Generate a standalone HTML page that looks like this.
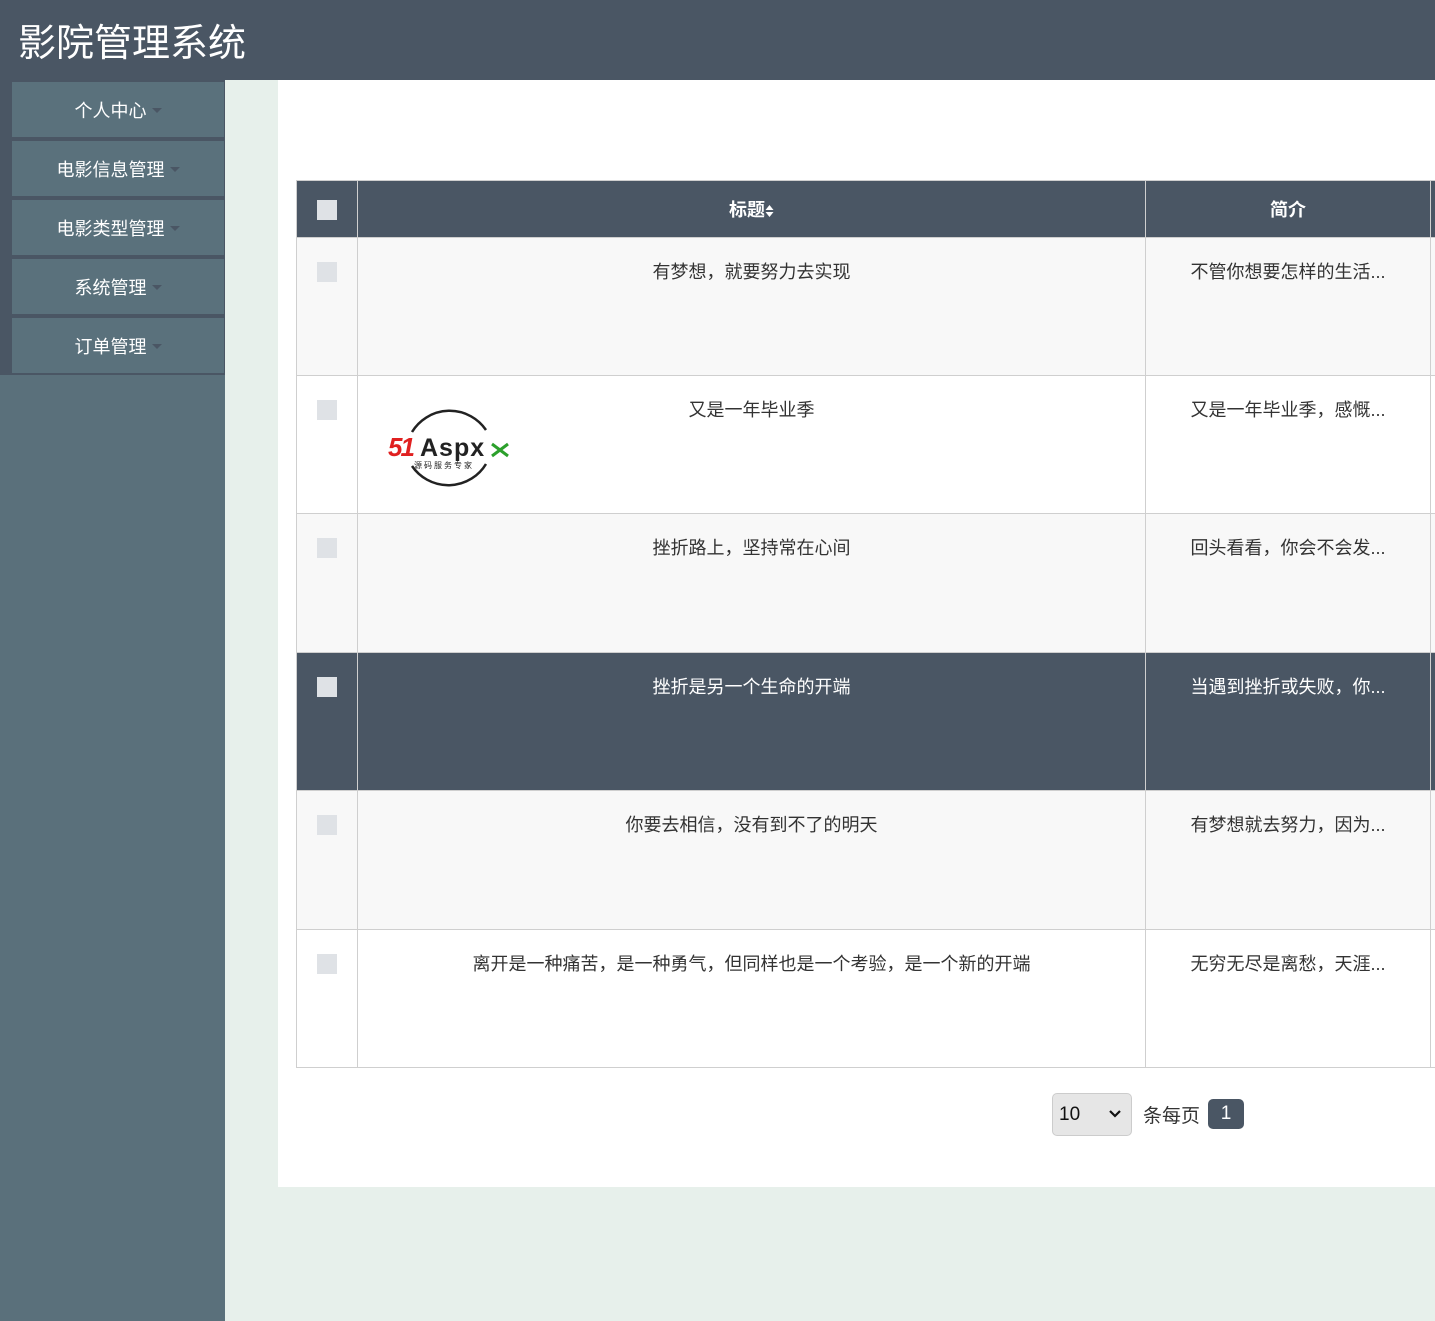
<!DOCTYPE html>
<html><head><meta charset="utf-8"><style>
*{margin:0;padding:0;box-sizing:border-box}
body{width:1435px;height:1321px;overflow:hidden;position:relative;background:#e7f0eb;font-family:"Liberation Sans","Noto Sans CJK SC",sans-serif;}
.hdr{position:absolute;left:0;top:0;width:1435px;height:80px;background:#4a5664;}
.hdr h1{position:absolute;left:18px;top:20px;font-size:38px;font-weight:normal;color:#fff;line-height:48px;}
.side{position:absolute;left:0;top:80px;width:225px;height:1241px;background:#5a707b;}
.menu{position:absolute;left:0;top:0;width:225px;height:295px;background:#4a5664;}
.mi{position:absolute;left:12px;width:212px;height:55px;background:#5a717c;color:#fff;font-size:18px;text-align:center;line-height:58px;}
.mi i{display:inline-block;width:0;height:0;border-left:5px solid transparent;border-right:5px solid transparent;border-top:5px solid #4a5664;vertical-align:middle;margin-left:5px;margin-top:-4px}
.panel{position:absolute;left:278px;top:80px;width:1157px;height:1107px;background:#fff;}
table{position:absolute;left:296px;top:180px;border-collapse:collapse;table-layout:fixed;width:1150px;font-size:18px;color:#333;}
td,th{border:1px solid #cfcfcf;text-align:center;vertical-align:top;}
th{background:#4a5664;color:#fff;height:57px;vertical-align:middle;font-size:18px;}
td{height:138px;padding-top:20px;}
tr.t td{height:139px}
tr.o td{background:#f8f8f8}
tr.w td{background:#fff}
tr.h td{background:#4a5664;color:#fff}
.cb{display:inline-block;width:20px;height:20px;background:#dfe2e6;margin-top:4px}
th .cb{margin-top:0;vertical-align:middle}
.sel{position:absolute;left:1052px;top:1093px;width:80px;height:43px;border:1px solid #ccc;border-radius:5px;background:#e6e6e6;font-size:19px;line-height:41px;padding-left:6px;color:#111}
.sel svg{position:absolute;right:10px;top:16px}
.per{position:absolute;left:1143px;top:1101px;font-size:19px;color:#333}
.pg{position:absolute;left:1208px;top:1099px;width:36px;height:30px;border-radius:5px;background:#4a5664;color:#fff;font-size:19px;text-align:center;line-height:30px}
</style></head><body>
<div class="hdr"><h1>影院管理系统</h1></div>
<div class="side"><div class="menu">
<div class="mi" style="top:2px">个人中心<i></i></div>
<div class="mi" style="top:61px">电影信息管理<i></i></div>
<div class="mi" style="top:120px">电影类型管理<i></i></div>
<div class="mi" style="top:179px">系统管理<i></i></div>
<div class="mi" style="top:238px">订单管理<i></i></div>
</div></div>
<div class="panel"></div>
<table>
<colgroup><col style="width:61px"><col style="width:788px"><col style="width:285px"><col style="width:16px"></colgroup>
<tr><th><span class="cb"></span></th><th>标题<svg width="9" height="14" viewBox="0 0 9 14" style="vertical-align:middle"><path d="M0.5 6 L4.5 1 L8.5 6Z M0.5 8 L4.5 13 L8.5 8Z" fill="#fff"/></svg></th><th>简介</th><th></th></tr>
<tr class="o"><td><span class="cb"></span></td><td>有梦想，就要努力去实现</td><td>不管你想要怎样的生活...</td><td></td></tr>
<tr class="w"><td><span class="cb"></span></td><td style="position:relative">又是一年毕业季
<svg style="position:absolute;left:28px;top:26px" width="126" height="92" viewBox="0 0 126 92"><path d="M26 30 A44 44 0 0 1 100 28" fill="none" stroke="#222" stroke-width="2.5"/><path d="M100 62 A44 44 0 0 1 26 64" fill="none" stroke="#222" stroke-width="2.5"/><text x="2" y="54" font-size="26" font-weight="bold" font-style="italic" fill="#e02020" font-family="Liberation Sans" letter-spacing="-2">51</text><text x="34" y="54" font-size="25" font-weight="bold" fill="#222" font-family="Liberation Sans" letter-spacing="1">Aspx</text><text x="28" y="66" font-size="8" fill="#222" font-family="Noto Sans CJK SC" letter-spacing="2">源码服务专家</text><path d="M106 42 l16 12 M122 42 l-16 12" stroke="#2ca02c" stroke-width="3"/></svg></td><td>又是一年毕业季，感慨...</td><td></td></tr>
<tr class="o t"><td><span class="cb"></span></td><td>挫折路上，坚持常在心间</td><td>回头看看，你会不会发...</td><td></td></tr>
<tr class="h"><td><span class="cb"></span></td><td>挫折是另一个生命的开端</td><td>当遇到挫折或失败，你...</td><td></td></tr>
<tr class="o t"><td><span class="cb"></span></td><td>你要去相信，没有到不了的明天</td><td>有梦想就去努力，因为...</td><td></td></tr>
<tr class="w"><td><span class="cb"></span></td><td>离开是一种痛苦，是一种勇气，但同样也是一个考验，是一个新的开端</td><td>无穷无尽是离愁，天涯...</td><td></td></tr>
</table>
<div class="sel">10<svg width="12" height="8" viewBox="0 0 12 8"><path d="M1 1 L6 6 L11 1" fill="none" stroke="#111" stroke-width="2.2"/></svg></div>
<div class="per">条每页</div>
<div class="pg">1</div>
</body></html>
